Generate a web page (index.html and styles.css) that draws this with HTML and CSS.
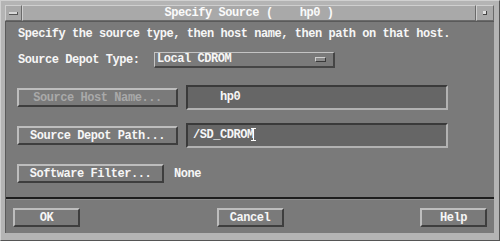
FILE: index.html
```
<!DOCTYPE html>
<html>
<head>
<meta charset="utf-8">
<link rel="stylesheet" href="styles.css">
</head>
<body>
<div class="window">
  <div class="titlebar">
    <div class="tb-btn tb-menu"><span class="bar"></span></div>
    <div class="tb-title">Specify Source (    hp0 )</div>
    <div class="tb-btn tb-min"><span class="dot"></span></div>
  </div>
  <div class="body">
    <p class="intro">Specify the source type, then host name, then path on that host.</p>
    <div class="row row-type">
      <span class="label">Source Depot Type:</span>
      <div class="option"><span class="option-text">Local CDROM</span><span class="ind"></span></div>
    </div>
    <div class="row row-field row-host">
      <button class="btn btn-wide" disabled>Source Host Name...</button>
      <div class="field">    hp0</div>
    </div>
    <div class="row row-field row-path">
      <button class="btn btn-wide">Source Depot Path...</button>
      <div class="field">/SD_CDROM<span class="ibeam"></span></div>
    </div>
    <div class="row row-filter">
      <button class="btn btn-filter">Software Filter...</button>
      <span class="value">None</span>
    </div>
    <div class="sep"></div>
    <div class="actions">
      <button class="btn btn-act">OK</button>
      <button class="btn btn-act">Cancel</button>
      <button class="btn btn-act">Help</button>
    </div>
  </div>
</div>
</body>
</html>
```
FILE: styles.css
```
* { box-sizing: border-box; }
html, body { margin: 0; padding: 0; }
body {
  width: 500px;
  height: 241px;
  background: #b6b6b6;
  font-family: "Liberation Mono", "DejaVu Sans Mono", monospace;
  font-weight: bold;
  font-size: 12px;
  letter-spacing: -0.45px;
  color: #f6f6f6;
}
.window {
  width: 500px;
  height: 241px;
  padding: 4px 5px 7px 4px;
  background: #b4b4b4;
  border-top: 1px solid #d0d0d0;
  border-left: 1px solid #d0d0d0;
  border-right: 1px solid #555;
  border-bottom: 1px solid #555;
  display: flex;
  flex-direction: column;
}
.titlebar {
  height: 16px;
  display: flex;
  background: #a9a9a9;
}
.tb-btn {
  width: 17px;
  height: 16px;
  border-top: 1px solid #cfcfcf;
  border-left: 1px solid #cfcfcf;
  border-right: 1px solid #6a6a6a;
  border-bottom: 1px solid #6a6a6a;
  display: flex;
  align-items: center;
  justify-content: center;
}
.tb-min { width: 18px; }
.tb-menu .bar {
  width: 9px;
  height: 3px;
  background: #d8d8d8;
  border-bottom: 1px solid #555;
  border-right: 1px solid #555;
}
.tb-min .dot {
  width: 4px;
  height: 4px;
  background: #e0e0e0;
  border-bottom: 1px solid #444;
  border-right: 1px solid #444;
}
.tb-title {
  flex: 1;
  height: 16px;
  line-height: 14px;
  text-align: center;
  white-space: pre;
  color: #fafafa;
  border-top: 1px solid #cfcfcf;
  border-left: 1px solid #cfcfcf;
  border-right: 1px solid #6a6a6a;
  border-bottom: 1px solid #6a6a6a;
}
.body {
  flex: 1;
  background: #7a7a7a;
  display: flex;
  flex-direction: column;
  border-top: 1px solid #5a5a5a;
  border-left: 1px solid #5a5a5a;
}
.intro {
  margin: 5px 0 0 0;
  padding-left: 12px;
  height: 14px;
  line-height: 14px;
  white-space: nowrap;
}
.row {
  display: flex;
  align-items: center;
  padding-left: 11px;
}
.row-type {
  margin-top: 11px;
  height: 16px;
  padding-left: 12px;
}
.row-type .label {
  width: 136px;
  line-height: 14px;
}
.option {
  width: 181px;
  height: 16px;
  display: flex;
  align-items: center;
  justify-content: space-between;
  padding: 0 7px 0 2px;
  border-top: 1px solid #c4c4c4;
  border-left: 1px solid #c4c4c4;
  border-right: 2px solid #454545;
  border-bottom: 2px solid #454545;
}
.option-text { line-height: 13px; }
.ind {
  width: 11px;
  height: 5px;
  border-top: 1px solid #cfcfcf;
  border-left: 1px solid #cfcfcf;
  border-right: 1px solid #3a3a3a;
  border-bottom: 1px solid #3a3a3a;
  background: #8a8a8a;
}
.row-field { height: 25px; }
.row-host { margin-top: 17px; }
.row-path { margin-top: 13px; }
.row-filter { margin-top: 16px; height: 19px; }
.btn {
  font-family: inherit;
  font-weight: bold;
  font-size: 12px;
  letter-spacing: -0.45px;
  color: #f6f6f6;
  background: #7a7a7a;
  height: 19px;
  padding: 0;
  margin: 0;
  line-height: 14px;
  border-top: 2px solid #bdbdbd;
  border-left: 2px solid #bdbdbd;
  border-right: 2px solid #3e3e3e;
  border-bottom: 2px solid #3e3e3e;
  text-align: center;
  white-space: nowrap;
}
.btn:disabled { color: #a9a9a9; }
.btn-wide { width: 161px; }
.btn-filter { width: 147px; }
.field {
  margin-left: 8px;
  width: 262px;
  height: 25px;
  background: #666666;
  border-top: 2px solid #3a3a3a;
  border-left: 2px solid #3a3a3a;
  border-right: 2px solid #b2b2b2;
  border-bottom: 2px solid #b2b2b2;
  padding-left: 5px;
  line-height: 21px;
  white-space: pre;
  display: flex;
  align-items: center;
}
.ibeam {
  display: inline-block;
  width: 5px;
  height: 13px;
  margin-left: -3px;
  margin-top: -2px;
  background:
    linear-gradient(#fff, #fff) center / 1px 100% no-repeat,
    linear-gradient(#fff, #fff) top / 5px 1px no-repeat,
    linear-gradient(#fff, #fff) bottom / 5px 1px no-repeat;
}
.value {
  margin-left: 10px;
  line-height: 14px;
}
.sep {
  margin-top: 14px;
  height: 3px;
  border-top: 2px solid #1e1e1e;
  border-bottom: 1px solid #8c8c8c;
}
.actions {
  margin-top: 8px;
  display: flex;
  justify-content: space-between;
  padding: 0 7px 0 7px;
}
.btn-act { width: 67px; }
```
